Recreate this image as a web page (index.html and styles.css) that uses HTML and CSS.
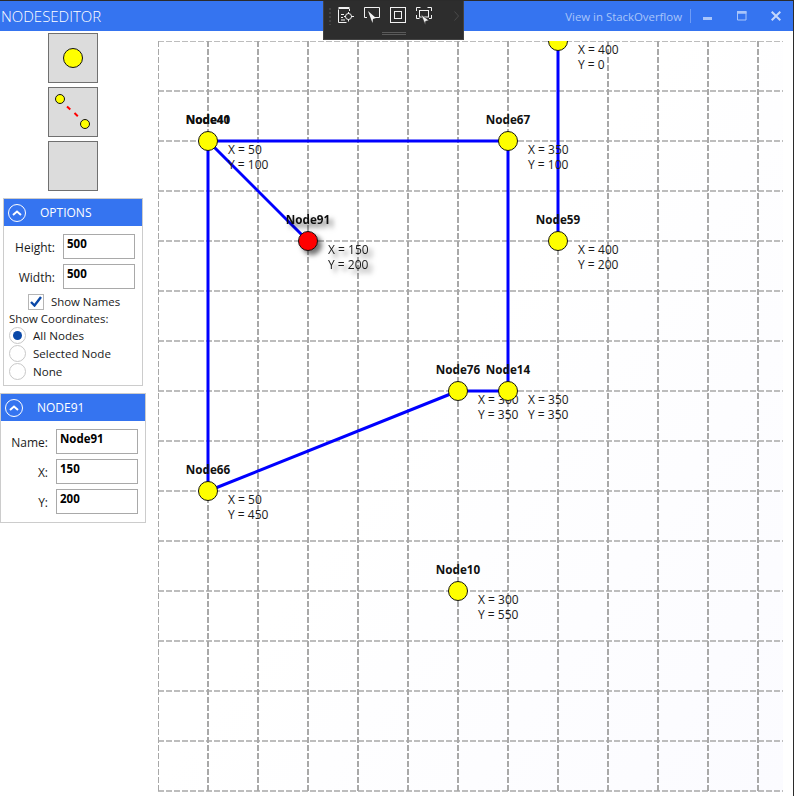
FILE: index.html
```html
<!DOCTYPE html>
<html lang="en">
<head>
    <meta charset="UTF-8">
    <title>NodesEditor</title>
    <link rel="stylesheet" href="styles.css">
</head>
<body>
<div class="window">
    <header class="titlebar">
        <span class="app-title">NODESEDITOR</span>
        <div class="title-actions">
            <span class="so-link">View in StackOverflow</span>
            <span class="title-sep"></span>
            <span class="win-btn"><svg width="10" height="10"><rect x="0" y="6" width="9" height="3" fill="#a9c5fa"/></svg></span>
            <span class="win-btn"><svg width="10" height="10"><path d="M.5.5h8.5v8.5h-8.5zM0 2h9" fill="none" stroke="#a9c5fa" stroke-width="1"/><rect y="0" width="9.5" height="2.5" fill="#a9c5fa"/></svg></span>
            <span class="win-btn"><svg width="10" height="10"><path d="M.7.7l8.6 8.6M9.3.7L.7 9.3" stroke="#c4d7fb" stroke-width="2"/></svg></span>
        </div>
    </header>

    <div class="toolbar">
        <span class="grip"></span>
        <svg class="tb-icon" viewBox="0 0 16 16" fill="none" stroke="#f2f2f2">
            <path d="M.5 2.500v13h8"/><path d="M.5 1h11" stroke-width="2"/><path d="M11.500 2v2"/>
            <path d="M3 7.500h3M3 10.500h2M3 13h4"/><circle cx="10.500" cy="9.500" r="3"/><path d="M10.500 5v2M10.500 12v2.500M6 9.500h2M13 9.500h3"/>
        </svg>
        <svg class="tb-icon" viewBox="0 0 16 16" fill="none" stroke="#f2f2f2">
            <path d="M3 10.500H.5V.5h15v10h-5.500"/><path d="M4 4l8 7-3 1-.500 4z" fill="#f2f2f2" stroke="none"/>
        </svg>
        <svg class="tb-icon" viewBox="0 0 16 16" fill="none" stroke="#f2f2f2">
            <rect x=".5" y=".5" width="15" height="15"/><rect x="4.500" y="4.500" width="7" height="7"/>
        </svg>
        <svg class="tb-icon" viewBox="0 0 16 16" fill="none" stroke="#f2f2f2">
            <path d="M.5 4V.5H4.500M11.500 .5h4V4M15.500 8v3.500H13M.5 8v3.500H3.500"/><rect x="3.500" y="3.500" width="9" height="6.500"/>
            <path d="M5 7.500l8 6-3.300.8-.500 3.200z" fill="#f2f2f2" stroke="#2d2d2d" stroke-width=".6"/>
        </svg>
        <svg class="tb-more" width="5" height="10" viewBox="0 0 5 10" fill="none" stroke="#4a4a4a"><path d="M.5.5L4.500 5 .5 9.500"/></svg>
        <span class="drag-bar"></span>
    </div>

    <div class="content">
        <aside class="sidebar">
            <div class="tools">
                <button class="tool" type="button">
                    <svg width="48" height="48"><circle cx="24" cy="24" r="9.500" class="node"/></svg>
                </button>
                <button class="tool" type="button">
                    <svg width="48" height="48">
                        <path d="M18 18.500l3.300 3M25.500 25l3.300 3.200" stroke="#f00" stroke-width="2"/>
                        <circle cx="11" cy="11" r="4.500" class="node"/><circle cx="36" cy="36" r="4.500" class="node"/>
                    </svg>
                </button>
                <button class="tool" type="button"></button>
            </div>

            <section class="panel panel-options">
                <div class="panel-head">
                    <span class="collapse"><svg width="10" height="6" viewBox="0 0 10 6"><path d="M1 5l4-3.500L9 5" fill="none" stroke="#fff" stroke-width="2"/></svg></span>
                    <span class="panel-title">OPTIONS</span>
                </div>
                <div class="panel-body">
                    <label class="field field-size"><span>Height:</span><input type="text" value="500"></label>
                    <label class="field field-size"><span>Width:</span><input type="text" value="500"></label>
                    <label class="check">
                        <span class="check-box"><svg width="12" height="11" viewBox="0 0 12 11"><path d="M1 6l3.500 3.500L11 1" fill="none" stroke="#0a48a8" stroke-width="2.400"/></svg></span>
                        Show Names
                    </label>
                    <div class="coords-title">Show Coordinates:</div>
                    <label class="radio"><span class="radio-dot on"></span>All Nodes</label>
                    <label class="radio"><span class="radio-dot"></span>Selected Node</label>
                    <label class="radio"><span class="radio-dot"></span>None</label>
                </div>
            </section>

            <section class="panel panel-node">
                <div class="panel-head">
                    <span class="collapse"><svg width="10" height="6" viewBox="0 0 10 6"><path d="M1 5l4-3.500L9 5" fill="none" stroke="#fff" stroke-width="2"/></svg></span>
                    <span class="panel-title">NODE91</span>
                </div>
                <div class="panel-body">
                    <label class="field field-node"><span>Name:</span><input type="text" value="Node91"></label>
                    <label class="field field-node"><span>X:</span><input type="text" value="150"></label>
                    <label class="field field-node"><span>Y:</span><input type="text" value="200"></label>
                </div>
            </section>
        </aside>

        <main class="canvas">
            <svg class="diagram" width="625" height="751" viewBox="158 41 625 751">
                <defs>
                    <linearGradient id="paper" x1="0.4" y1="0.5" x2="1" y2="1">
                        <stop offset="0" stop-color="#fff"/>
                        <stop offset="1" stop-color="#fbfbff"/>
                    </linearGradient>
                    <filter id="shadow" x="-50%" y="-50%" width="220%" height="220%">
                        <feDropShadow dx="4" dy="4" stdDeviation="2.500" flood-color="#000" flood-opacity=".55"/>
                    </filter>
                </defs>
                <rect x="158" y="41" width="625" height="751" fill="url(#paper)"/>

                <!-- grid -->
                <path class="grid-h" d="M158 41H783M158 91H783M158 141H783M158 191H783M158 241H783M158 291H783M158 341H783M158 391H783M158 441H783M158 491H783M158 541H783M158 591H783M158 641H783M158 691H783M158 741H783M158 791H783"/>
                <path class="grid-v" d="M158 41V791M208 41V791M258 41V791M308 41V791M358 41V791M408 41V791M458 41V791M508 41V791M558 41V791M608 41V791M658 41V791M708 41V791M758 41V791"/>

                <!-- edges -->
                <g class="edges">
                    <path d="M208 141H508"/>
                    <path d="M208 141V491"/>
                    <path d="M208 141L308 241"/>
                    <path d="M508 141V391"/>
                    <path d="M458 391H508"/>
                    <path d="M458 391L208 491"/>
                    <path d="M558 41V241"/>
                </g>

                <!-- nodes -->
                <g>
                    <circle class="node" cx="558" cy="41" r="9.500"/>
                    <text class="coord" x="578" y="54">X = 400</text><text class="coord" x="578" y="69">Y = 0</text>
                </g>
                <g>
                    <circle class="node" cx="208" cy="141" r="9.500"/>
                    <text class="name" x="208" y="124">Node40</text><text class="name" x="208" y="124">Node41</text>
                    <text class="coord" x="228" y="154">X = 50</text><text class="coord" x="228" y="169">Y = 100</text>
                </g>
                <g>
                    <circle class="node" cx="508" cy="141" r="9.500"/>
                    <text class="name" x="508" y="124">Node67</text>
                    <text class="coord" x="528" y="154">X = 350</text><text class="coord" x="528" y="169">Y = 100</text>
                </g>
                <g>
                    <circle class="node" cx="558" cy="241" r="9.500"/>
                    <text class="name" x="558" y="224">Node59</text>
                    <text class="coord" x="578" y="254">X = 400</text><text class="coord" x="578" y="269">Y = 200</text>
                </g>
                <g>
                    <circle class="node" cx="458" cy="391" r="9.500"/>
                    <text class="name" x="458" y="374">Node76</text>
                    <text class="coord" x="478" y="404">X = 300</text><text class="coord" x="478" y="419">Y = 350</text>
                </g>
                <g>
                    <circle class="node" cx="508" cy="391" r="9.500"/>
                    <text class="name" x="508" y="374">Node14</text>
                    <text class="coord" x="528" y="404">X = 350</text><text class="coord" x="528" y="419">Y = 350</text>
                </g>
                <g>
                    <circle class="node" cx="208" cy="491" r="9.500"/>
                    <text class="name" x="208" y="474">Node66</text>
                    <text class="coord" x="228" y="504">X = 50</text><text class="coord" x="228" y="519">Y = 450</text>
                </g>
                <g>
                    <circle class="node" cx="458" cy="591" r="9.500"/>
                    <text class="name" x="458" y="574">Node10</text>
                    <text class="coord" x="478" y="604">X = 300</text><text class="coord" x="478" y="619">Y = 550</text>
                </g>
                <g class="selected">
                    <circle class="node node-selected" cx="308" cy="241" r="9.500"/>
                    <text class="name" x="308" y="224">Node91</text>
                    <text class="coord" x="328" y="254">X = 150</text><text class="coord" x="328" y="269">Y = 200</text>
                </g>
            </svg>
        </main>
    </div>
</div>
</body>
</html>
```

FILE: styles.css
```css
* {
    box-sizing: border-box;
}
html, body {
    height: 100%;
}
body {
    margin: 0;
    background: #fff;
    color: #1a1a1a;
    font-family: "Open Sans", "Noto Sans", Arial, sans-serif;
    font-size: 12px;
    overflow: hidden;
}
.window {
    position: relative;
    height: 796px;
    border-top: 1px solid #2b2b2b;
    border-right: 1px solid #2b2b2b;
    display: flex;
    flex-direction: column;
}

/* title bar */
.titlebar {
    flex: 0 0 30px;
    display: flex;
    align-items: center;
    justify-content: space-between;
    padding-left: 1px;
    background: #3574f0;
}
.app-title {
    color: #fff;
    font-size: 15px;
    font-weight: 300;
}
.title-actions {
    display: flex;
    align-items: center;
}
.so-link {
    color: #a9c5fa;
    font-size: 11.400px;
    margin-right: 8px;
}
.title-sep {
    width: 1px;
    height: 14px;
    background: #6f9cf5;
}
.win-btn {
    width: 34px;
    height: 30px;
    display: flex;
    align-items: center;
    justify-content: center;
}
.win-btn:first-of-type {
    margin-left: -1px;
}

/* floating debug toolbar */
.toolbar {
    position: absolute;
    left: 323px;
    top: 0;
    width: 141px;
    height: 39px;
    padding: 6px 0 0 14px;
    display: flex;
    align-items: flex-start;
    gap: 10px;
    background: #2d2d2d;
    border: 1px solid #434343;
    border-top: none;
    z-index: 5;
}
.tb-icon {
    width: 16px;
    height: 16px;
    flex: none;
    overflow: visible;
}
.tb-more {
    margin: 4px 0 0 12px;
}
.grip {
    position: absolute;
    left: 4px;
    top: 6px;
    width: 4px;
    height: 18px;
    background-image: radial-gradient(#444 1px, transparent 1px);
    background-size: 4px 4px;
}
.drag-bar {
    position: absolute;
    left: 58px;
    bottom: 4px;
    width: 24px;
    height: 3px;
    border-top: 1px solid #5a5a5a;
    border-bottom: 1px solid #5a5a5a;
}

/* sidebar */
.content {
    flex: 1;
    display: flex;
    min-height: 0;
}
.sidebar {
    flex: 0 0 158px;
    display: flex;
    flex-direction: column;
}
.tools {
    margin: 2px 0 0 48px;
    display: flex;
    flex-direction: column;
    gap: 4px;
}
.tool {
    display: block;
    width: 50px;
    height: 50px;
    padding: 0;
    background: #dcdcdc;
    border: 1px solid #707070;
}
.tool svg {
    display: block;
}
.node {
    fill: #ff0;
    stroke: #111;
    stroke-width: 1;
}
.panel {
    border: 1px solid #ccc;
    background: #fff;
}
.panel-options {
    width: 140px;
    margin: 7px 0 0 3px;
    height: 188px;
}
.panel-node {
    width: 146px;
    margin-top: 7px;
    height: 130px;
}
.panel-head {
    height: 27px;
    display: flex;
    align-items: center;
    background: #3574f0;
    color: #fff;
}
.collapse {
    width: 18px;
    height: 18px;
    margin-left: 4px;
    border: 1.500px solid #fff;
    border-radius: 50%;
    display: flex;
    align-items: center;
    justify-content: center;
}
.panel-title {
    font-size: 12px;
    margin-left: 14px;
}
.panel-body {
    display: flex;
    flex-direction: column;
    padding-top: 8px;
}
.panel-node .panel-body {
    gap: 5px;
}
.field {
    display: flex;
    align-items: center;
    justify-content: flex-end;
    gap: 8px;
}
.field span {
    padding-top: 2px;
}
.field input {
    height: 25px;
    padding: 0 3px 6px;
    border: 1px solid #a9a9a9;
    font: bold 11.500px "Open Sans", Arial, sans-serif;
    color: #000;
}
.field-size {
    padding-right: 7px;
    margin-bottom: 5px;
}
.field-size input {
    width: 72px;
}
.field-node {
    padding-right: 7px;
}
.field-node input {
    width: 82px;
}
.check {
    display: flex;
    align-items: center;
    gap: 7px;
    margin: -1px 0 0 24px;
    height: 17px;
    font-size: 11.400px;
}
.check-box {
    width: 16px;
    height: 16px;
    border: 1px solid #b5b5b5;
    display: flex;
    align-items: center;
    justify-content: center;
}
.coords-title {
    margin: 1px 0 0 5px;
    line-height: 15px;
    font-size: 11.400px;
}
.radio {
    display: flex;
    align-items: center;
    gap: 7px;
    margin-left: 5px;
    height: 18px;
    font-size: 11.600px;
}
.radio-dot {
    width: 17px;
    height: 17px;
    border: 1px solid #c8c8c8;
    border-radius: 50%;
    display: flex;
    align-items: center;
    justify-content: center;
}
.radio-dot.on::after {
    content: "";
    width: 9px;
    height: 9px;
    border-radius: 50%;
    background: #0a48a8;
}

/* diagram */
.canvas {
    flex: 1;
    min-width: 0;
    padding-top: 10px;
}
.diagram {
    display: block;
}
.grid-h {
    fill: none;
    stroke: #a8a8a8;
    stroke-width: 1.500;
    stroke-dasharray: 6 2;
}
.grid-v {
    fill: none;
    stroke: #a8a8a8;
    stroke-width: 2;
    stroke-dasharray: 6 2;
}
.edges path {
    fill: none;
    stroke: #00f;
    stroke-width: 3;
}
.node-selected {
    fill: #f00;
}
.name {
    font-size: 11.700px;
    font-weight: bold;
    text-anchor: middle;
    fill: #111;
}
.coord {
    font-size: 12px;
    fill: #1a1a1a;
}
.selected {
    filter: url(#shadow);
}
```
